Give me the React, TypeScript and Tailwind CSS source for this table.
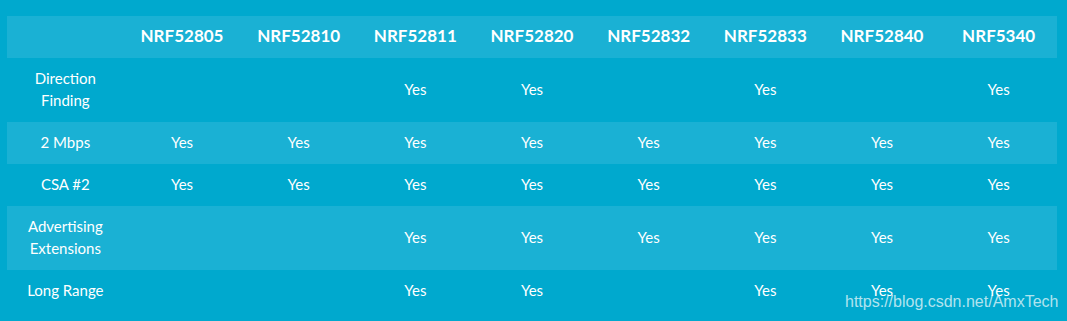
const models = [
  "NRF52805",
  "NRF52810",
  "NRF52811",
  "NRF52820",
  "NRF52832",
  "NRF52833",
  "NRF52840",
  "NRF5340",
];

const rows: Array<{ label: string[]; yes: boolean[]; light: boolean; tall: boolean }> = [
  { label: ["Direction", "Finding"], yes: [false, false, true, true, false, true, false, true], light: false, tall: true },
  { label: ["2 Mbps"], yes: [true, true, true, true, true, true, true, true], light: true, tall: false },
  { label: ["CSA #2"], yes: [true, true, true, true, true, true, true, true], light: false, tall: false },
  { label: ["Advertising", "Extensions"], yes: [false, false, true, true, true, true, true, true], light: true, tall: true },
  { label: ["Long Range"], yes: [false, false, true, true, false, true, true, true], light: false, tall: false },
];

export default function App() {
  return (
    <div className="relative w-[1067px] h-[321px] bg-[#00a9ce] pt-4 px-[7px] text-white font-['Lato',sans-serif] overflow-hidden">
      <div className="w-[1050px]">
        <div className="grid grid-cols-9 h-[42px] items-center pb-[2px] bg-[#1ab1d4] text-[17px] font-bold">
          <div />
          {models.map((m) => (
            <div key={m} className="text-center">
              {m}
            </div>
          ))}
        </div>
        {rows.map((r, i) => (
          <div
            key={i}
            className={
              "grid grid-cols-9 items-center pb-[3px] text-[15px] leading-[22px] " +
              (r.tall ? "h-16 " : "h-[42px] ") +
              (r.light ? "bg-[#1ab1d4]" : "bg-[#00a9ce]")
            }
          >
            <div className="text-center">
              {r.label.map((l) => (
                <div key={l}>{l}</div>
              ))}
            </div>
            {r.yes.map((y, j) => (
              <div key={j} className="text-center">
                {y ? "Yes" : ""}
              </div>
            ))}
          </div>
        ))}
      </div>
      <div className="absolute left-[845px] top-[290px] text-[16px] text-white/70 font-['Liberation_Sans',sans-serif]">
        https://blog.csdn.net/AmxTech
      </div>
    </div>
  );
}
